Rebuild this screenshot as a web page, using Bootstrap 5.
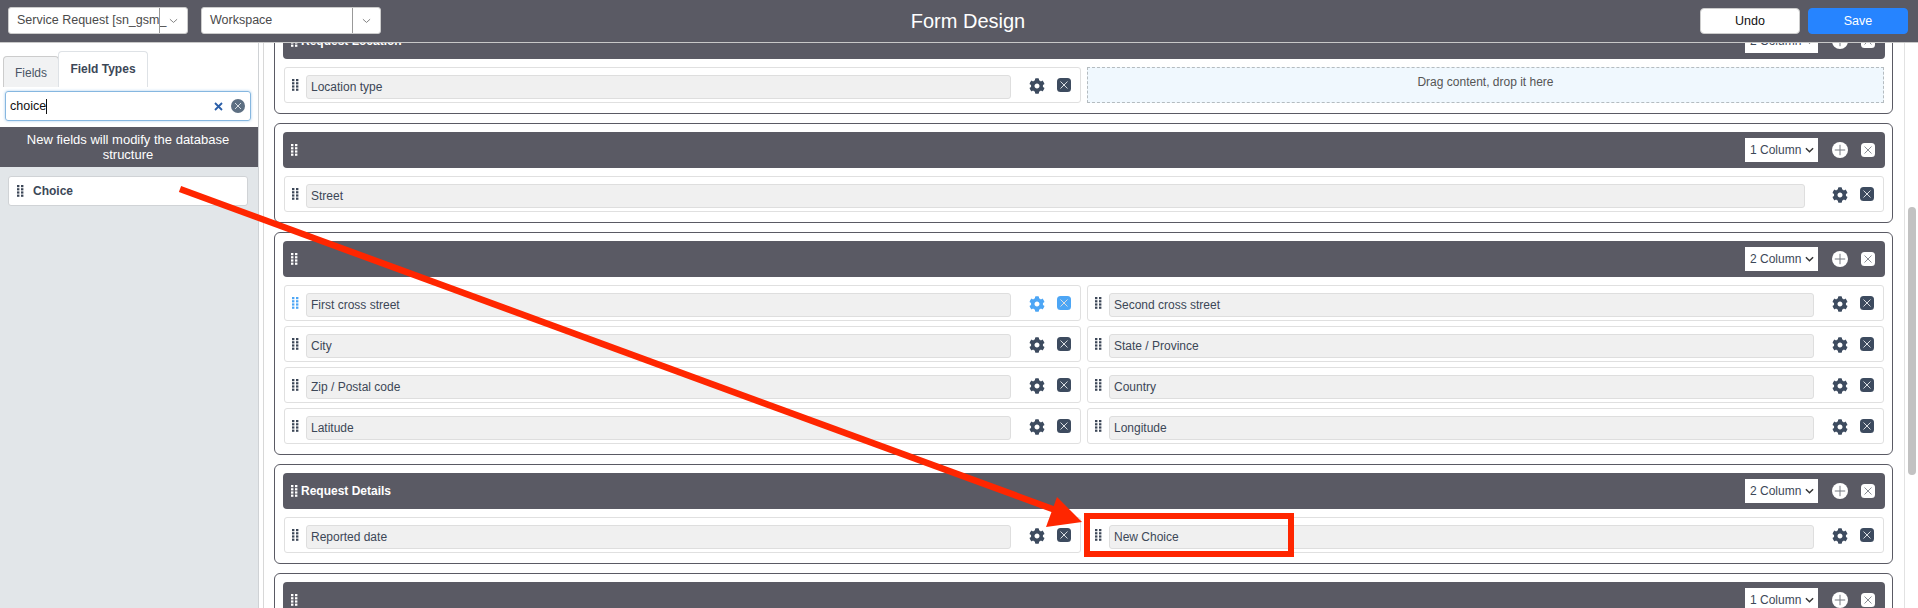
<!DOCTYPE html>
<html lang="en"><head><meta charset="utf-8"><title>Form Design</title>
<link href="https://cdn.jsdelivr.net/npm/bootstrap@5.3.0/dist/css/bootstrap.min.css" rel="stylesheet">
<style>
html,body{height:608px;overflow:hidden}
body{font-family:"Liberation Sans",Arial,sans-serif;font-size:12px;color:#3c4757;background:#fff;position:relative}
.topbar{height:43px;background:#5a5a64;border-bottom:1px solid #c8c8c8;padding:7px 10px 0 8px;position:relative;z-index:2}
.pick{width:180px;height:27px;background:#fff;border:1px solid #ccc;border-radius:3px;color:#4a4a4a;font-size:12.5px}
.pick span{flex:1;min-width:0;white-space:nowrap;padding-left:8px}
.pick i{width:28px;height:100%;border-left:1px solid #999;display:flex;align-items:center;justify-content:center}
.pick+.pick{margin-left:13px}
.ttl{position:absolute;left:0;right:0;top:9px;text-align:center;color:#fff;font-size:20px;line-height:24px;padding-left:18px;margin:0;font-weight:300}
.tbtn{width:100px;height:26px;padding:0;font-size:12.5px;border-radius:4px;line-height:24px;margin-top:1px}
.tbtn.undo{background:#fff;color:#111;border:1px solid #ccc}
.tbtn.save{background:#2684ff;color:#fff;border:1px solid #2684ff;margin-left:8px}
.shell{height:565px}
.side{width:259px;background:#e2e6e9;border-right:1px solid #cfd2d5;flex:none}
.upper{background:#fff;height:84px;padding-top:8px}
.upper .nav-tabs{border:0;padding-left:3px;height:36px;align-items:flex-end;--bs-nav-tabs-border-width:0}
.upper .nav-link{font-size:12px;color:#4a5565;border:1px solid #ccc;border-bottom:0;border-radius:4px 4px 0 0;background:#f1f2f3;padding:0;width:56px;height:31px;line-height:32px;text-align:center}
.upper .nav-link.active{background:#fff;color:#3c4757;font-weight:700;width:90px;height:36px;line-height:35px;margin-left:-1px;padding-bottom:4px}
.srch{margin:4px 0 0 5px;width:246px;height:30px;border:1px solid #86b7e0;border-radius:3px;box-shadow:0 0 3px #a9cdec;padding:0 5px 0 4px;color:#111;font-size:12.5px}
.srch u{display:inline-block;width:1px;height:15px;background:#111;margin-left:0;vertical-align:middle}
.notice{background:#5a5a64;color:#fff;height:40px;text-align:center;font-size:13px;line-height:15px;padding:5px 20px 0 18px}
.typecard{margin:9px 10px 0 8px;height:30px;background:#fff;border:1px solid #d0d3d6;border-radius:3px;padding-left:8px;font-weight:700;gap:9px}
.gapbar{width:4px;flex:none}
.stage{flex:1;min-width:0;border-left:1px solid #d8d8d8;overflow:hidden;padding:0 11px 0 10px}
.vtrack{width:14px;flex:none;border-left:1px solid #e2e2e2;background:#fff;padding-left:3px}
.vthumb{width:8px;height:268px;margin-top:164px;background:#c2c2c2;border-radius:4px}
.blockbox{height:100px;border:1px solid #5a5a64;border-radius:6px;padding:8px 7px 10px 8px;margin-bottom:9px}
.blockbox.tall{height:223px}
.blockbox.first{margin-top:-29px}
.bhead{height:36px;background:#5a5a64;border-radius:4px;padding:0 10px 0 8px;color:#fff;font-weight:700;font-size:12px;margin-bottom:8px}
.bhead .ttxt{margin-left:3px}
.colsel{width:73px;height:24px;border:0;border-radius:0;margin-left:auto;margin-right:14px;padding:0 0 0 5px;font-size:12px;color:#3c4757;appearance:none;font-family:inherit;background:#fff url("data:image/svg+xml,%3Csvg xmlns='http://www.w3.org/2000/svg' viewBox='0 0 10 6'%3E%3Cpath d='M1 1l4 4 4-4' fill='none' stroke='%23333' stroke-width='1.6'/%3E%3C/svg%3E") no-repeat right 4px center/9px 6px}
.roundp{width:16px;height:16px;margin-right:13px;flex:none}
.sqx{width:14px;height:14px;flex:none;display:block}
.colgrid{display:grid;grid-template-columns:1fr 1fr;column-gap:6px;row-gap:5px;margin:0 1px}
.grid-full{grid-column:1 / -1}
.frow{height:36px;border:1px solid #e0e0e0;border-radius:3px;background:#fff;padding:7px 9px 0 7px;min-width:0}
.grip{width:7px;height:12px;flex:none;margin-top:4px;margin-right:7px;color:#3c4757}
.fbox{flex:1;min-width:0;height:24px;background:#f0f0f0;border:1px solid #dedede;border-radius:3px;padding-left:4px;line-height:22px;font-size:12px;margin-right:18px}
.wide .fbox{margin-right:27px}
.gear{width:16px;height:16px;flex:none;margin-top:3px;margin-right:12px;color:#3d4b5f}
.frow .sqx{margin-top:3px;color:#3d4b5f}
.hot .gear,.hot .sqx,.hot .grip{color:#4da6f5}
.drop{height:36px;border:1px dashed #b5bcc0;background:#f0f8fe;text-align:center;color:#555;font-size:12px;line-height:29px}
.mark-layer{position:absolute;left:0;top:0;z-index:5;pointer-events:none}
</style></head>
<body>
<svg width="0" height="0" class="position-absolute"><defs>
<symbol id="g" viewBox="0 0 7 12"><g fill="currentColor"><rect x="0" y="0" width="2.4" height="2.2"/><rect x="4" y="0" width="2.4" height="2.2"/><rect x="0" y="3.2" width="2.4" height="2.2"/><rect x="4" y="3.2" width="2.4" height="2.2"/><rect x="0" y="6.4" width="2.4" height="2.2"/><rect x="4" y="6.4" width="2.4" height="2.2"/><rect x="0" y="9.6" width="2.4" height="2.2"/><rect x="4" y="9.6" width="2.4" height="2.2"/></g></symbol>
<symbol id="c" viewBox="0 0 512 512"><path fill="currentColor" d="M487.4 315.7l-42.6-24.6c4.3-23.2 4.3-47 0-70.2l42.6-24.6c4.9-2.8 7.1-8.6 5.5-14-11.1-35.6-30-67.8-54.7-94.6-3.8-4.1-10-5.1-14.8-2.3L380.8 110c-17.9-15.4-38.5-27.3-60.8-35.1V25.8c0-5.6-3.9-10.5-9.4-11.7-36.7-8.2-74.3-7.8-109.2 0-5.5 1.2-9.4 6.1-9.4 11.7V75c-22.2 7.9-42.8 19.8-60.8 35.1L88.7 85.5c-4.9-2.8-11-1.9-14.8 2.3-24.7 26.7-43.6 58.9-54.7 94.6-1.7 5.4.6 11.2 5.5 14L67.3 221c-4.3 23.2-4.3 47 0 70.2l-42.6 24.6c-4.9 2.8-7.1 8.6-5.5 14 11.1 35.6 30 67.8 54.7 94.6 3.8 4.1 10 5.1 14.8 2.3l42.6-24.6c17.9 15.4 38.5 27.3 60.8 35.1v49.2c0 5.6 3.9 10.5 9.4 11.7 36.7 8.2 74.3 7.8 109.2 0 5.5-1.2 9.4-6.1 9.4-11.7v-49.2c22.2-7.9 42.8-19.8 60.8-35.1l42.6 24.6c4.9 2.8 11 1.9 14.8-2.3 24.7-26.7 43.6-58.9 54.7-94.6 1.5-5.5-.7-11.3-5.6-14.1zM256 336c-44.1 0-80-35.9-80-80s35.9-80 80-80 80 35.9 80 80-35.9 80-80 80z"/></symbol>
<symbol id="x" viewBox="0 0 14 14"><rect width="14" height="14" rx="3.5" fill="currentColor"/><path d="M3.5 3.5l7 7M10.5 3.5l-7 7" stroke="#d9dde2" stroke-width="1"/></symbol>
<symbol id="wx" viewBox="0 0 14 14"><rect width="14" height="14" rx="3.5" fill="#fff"/><path d="M3.5 3.5l7 7M10.5 3.5l-7 7" stroke="#8a8d94" stroke-width="1"/></symbol>
<symbol id="p" viewBox="0 0 16 16"><circle cx="8" cy="8" r="8" fill="#fff"/><path d="M8 2.8v10.4M2.8 8h10.4" stroke="#777a82" stroke-width="1"/></symbol>
<symbol id="chev" viewBox="0 0 10 6"><path d="M1 1l4 3.6L9 1" fill="none" stroke="#777" stroke-width="1"/></symbol>
</defs></svg>

<header class="topbar d-flex">
  <div class="pick d-flex align-items-center"><span>Service Request [sn_gsm_</span><i><svg width="9" height="6"><use href="#chev"/></svg></i></div>
  <div class="pick d-flex align-items-center"><span>Workspace</span><i><svg width="9" height="6"><use href="#chev"/></svg></i></div>
  <h1 class="ttl">Form Design</h1>
  <div class="ms-auto d-flex position-relative">
    <button class="btn tbtn undo">Undo</button><button class="btn tbtn save">Save</button>
  </div>
</header>

<div class="shell d-flex">
  <aside class="side">
    <div class="upper">
      <ul class="nav nav-tabs">
        <li class="nav-item"><a class="nav-link" href="#">Fields</a></li>
        <li class="nav-item"><a class="nav-link active" href="#">Field Types</a></li>
      </ul>
      <div class="srch d-flex align-items-center"><span class="flex-grow-1">choice<u></u></span>
        <svg width="9" height="9" class="me-2" viewBox="0 0 9 9"><path d="M1 1l7 7M8 1L1 8" stroke="#2a5ea8" stroke-width="1.8"/></svg>
        <svg width="14" height="14" viewBox="0 0 14 14"><circle cx="7" cy="7" r="7" fill="#5d6f82"/><path d="M4 4l6 6M10 4l-6 6" stroke="#d5dbe1" stroke-width="1"/></svg>
      </div>
    </div>
    <div class="notice">New fields will modify the database structure</div>
    <div class="typecard d-flex align-items-center"><svg class="grip m-0"><use href="#g"/></svg>Choice</div>
  </aside>
  <div class="gapbar"></div>
  <main class="stage">
    <section class="blockbox first">
      <div class="bhead d-flex align-items-center"><svg class="grip m-0 text-white"><use href="#g"/></svg><span class="ttxt">Request Location</span><select class="colsel"><option>2 Column</option></select><svg class="roundp"><use href="#p"/></svg><svg class="sqx"><use href="#wx"/></svg></div>
      <div class="colgrid">
        <div class="frow d-flex"><svg class="grip"><use href="#g"/></svg><div class="fbox">Location type</div><svg class="gear"><use href="#c"/></svg><svg class="sqx"><use href="#x"/></svg></div>
        <div class="drop">Drag content, drop it here</div>
      </div>
    </section>
    <section class="blockbox">
      <div class="bhead d-flex align-items-center"><svg class="grip m-0 text-white"><use href="#g"/></svg><select class="colsel"><option>1 Column</option></select><svg class="roundp"><use href="#p"/></svg><svg class="sqx"><use href="#wx"/></svg></div>
      <div class="colgrid"><div class="frow wide d-flex grid-full"><svg class="grip"><use href="#g"/></svg><div class="fbox">Street</div><svg class="gear"><use href="#c"/></svg><svg class="sqx"><use href="#x"/></svg></div></div>
    </section>
    <section class="blockbox tall">
      <div class="bhead d-flex align-items-center"><svg class="grip m-0 text-white"><use href="#g"/></svg><select class="colsel"><option>2 Column</option></select><svg class="roundp"><use href="#p"/></svg><svg class="sqx"><use href="#wx"/></svg></div>
      <div class="colgrid">
        <div class="frow hot d-flex"><svg class="grip"><use href="#g"/></svg><div class="fbox">First cross street</div><svg class="gear"><use href="#c"/></svg><svg class="sqx"><use href="#x"/></svg></div>
        <div class="frow d-flex"><svg class="grip"><use href="#g"/></svg><div class="fbox">Second cross street</div><svg class="gear"><use href="#c"/></svg><svg class="sqx"><use href="#x"/></svg></div>
        <div class="frow d-flex"><svg class="grip"><use href="#g"/></svg><div class="fbox">City</div><svg class="gear"><use href="#c"/></svg><svg class="sqx"><use href="#x"/></svg></div>
        <div class="frow d-flex"><svg class="grip"><use href="#g"/></svg><div class="fbox">State / Province</div><svg class="gear"><use href="#c"/></svg><svg class="sqx"><use href="#x"/></svg></div>
        <div class="frow d-flex"><svg class="grip"><use href="#g"/></svg><div class="fbox">Zip / Postal code</div><svg class="gear"><use href="#c"/></svg><svg class="sqx"><use href="#x"/></svg></div>
        <div class="frow d-flex"><svg class="grip"><use href="#g"/></svg><div class="fbox">Country</div><svg class="gear"><use href="#c"/></svg><svg class="sqx"><use href="#x"/></svg></div>
        <div class="frow d-flex"><svg class="grip"><use href="#g"/></svg><div class="fbox">Latitude</div><svg class="gear"><use href="#c"/></svg><svg class="sqx"><use href="#x"/></svg></div>
        <div class="frow d-flex"><svg class="grip"><use href="#g"/></svg><div class="fbox">Longitude</div><svg class="gear"><use href="#c"/></svg><svg class="sqx"><use href="#x"/></svg></div>
      </div>
    </section>
    <section class="blockbox">
      <div class="bhead d-flex align-items-center"><svg class="grip m-0 text-white"><use href="#g"/></svg><span class="ttxt">Request Details</span><select class="colsel"><option>2 Column</option></select><svg class="roundp"><use href="#p"/></svg><svg class="sqx"><use href="#wx"/></svg></div>
      <div class="colgrid">
        <div class="frow d-flex"><svg class="grip"><use href="#g"/></svg><div class="fbox">Reported date</div><svg class="gear"><use href="#c"/></svg><svg class="sqx"><use href="#x"/></svg></div>
        <div class="frow d-flex"><svg class="grip"><use href="#g"/></svg><div class="fbox">New Choice</div><svg class="gear"><use href="#c"/></svg><svg class="sqx"><use href="#x"/></svg></div>
      </div>
    </section>
    <section class="blockbox">
      <div class="bhead d-flex align-items-center"><svg class="grip m-0 text-white"><use href="#g"/></svg><select class="colsel"><option>1 Column</option></select><svg class="roundp"><use href="#p"/></svg><svg class="sqx"><use href="#wx"/></svg></div>
    </section>
  </main>
  <div class="vtrack"><div class="vthumb"></div></div>
</div>

<svg class="mark-layer" width="1918" height="608" viewBox="0 0 1918 608">
  <path d="M180 189L1058 511" stroke="#ff2600" stroke-width="6.5" fill="none"/>
  <path d="M1082 522L1057 497L1046 527Z" fill="#ff2600"/>
  <rect x="1087" y="516" width="204" height="38" fill="none" stroke="#ff2600" stroke-width="6"/>
</svg>
<script src="https://cdn.jsdelivr.net/npm/bootstrap@5.3.0/dist/js/bootstrap.bundle.min.js"></script>
</body></html>
